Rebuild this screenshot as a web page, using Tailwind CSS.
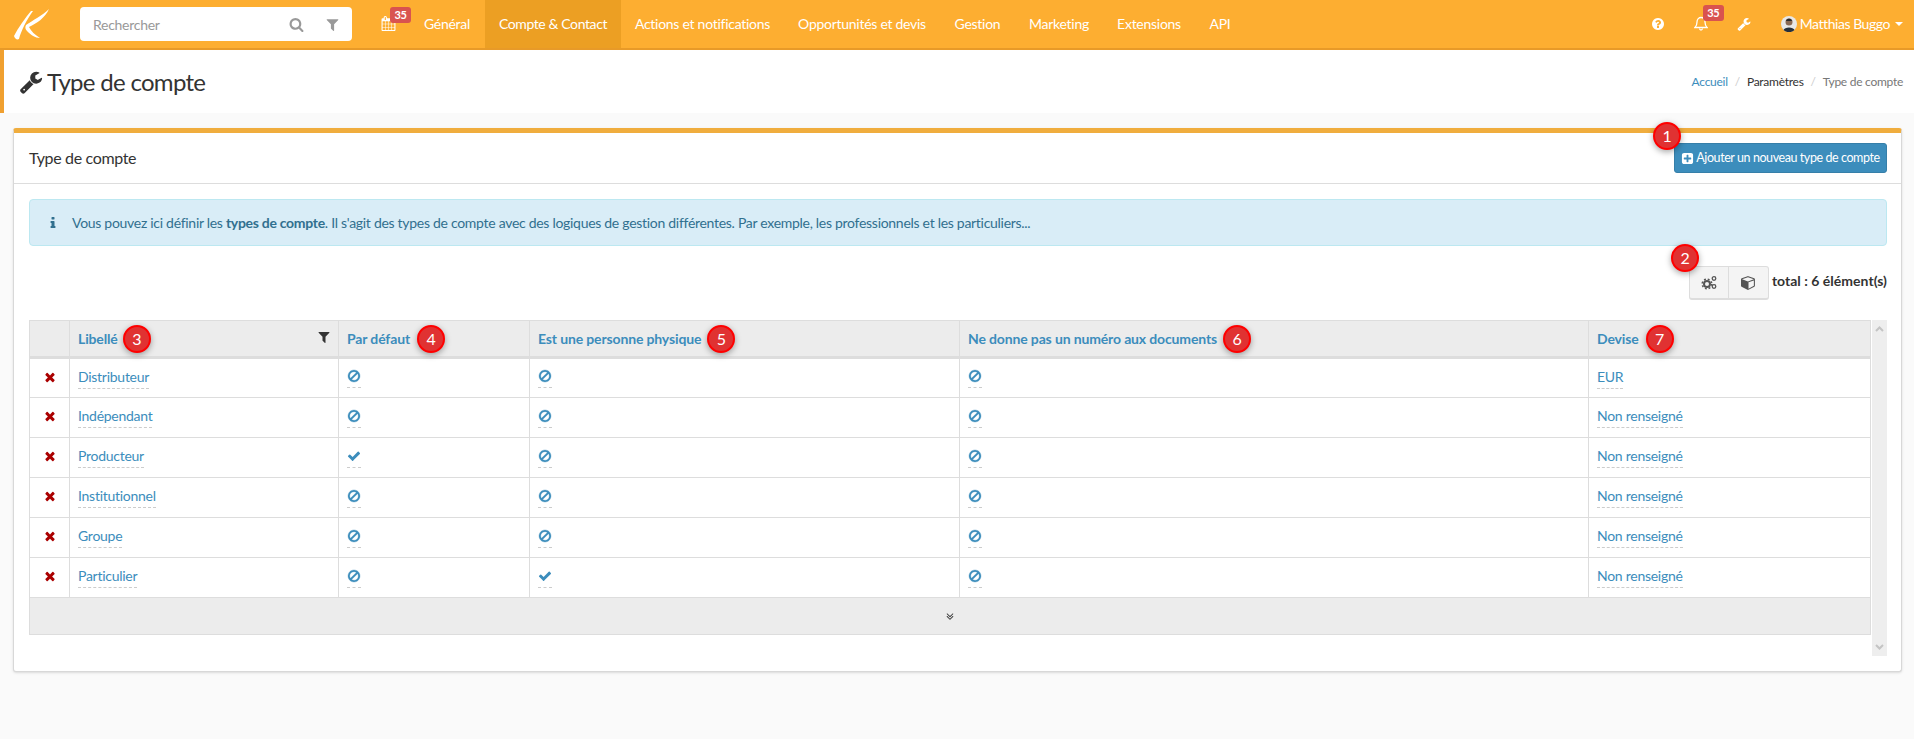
<!doctype html>
<html lang="fr">
<head>
<meta charset="utf-8">
<title>Type de compte</title>
<script src="https://cdn.jsdelivr.net/npm/@tailwindcss/browser@4"></script>
</head>
<body class="bg-[#fafafa] text-[#333] text-[14px] tracking-[-0.27px] h-[739px] overflow-hidden [font-family:Lato,sans-serif]">

<!-- Icon set -->
<svg class="hidden">
  <symbol id="i-ban" viewBox="0 0 1792 1792"><path stroke="#3c8dbc" stroke-width="40" d="M1440 893q0-161-87-295l-754 753q137 89 297 89 111 0 211.5-43.5t173.5-116.5 116-174.5 43-212.5zm-999 299l755-754q-135-91-300-91-148 0-273 73t-198 199-73 274q0 162 89 299zm1223-299q0 157-61 300t-163.5 246-245 164-298.5 61-298.5-61-245-164-163.5-246-61-300 61-299.5 163.5-245.5 245-164 298.5-61 298.5 61 245 164 163.5 245.5 61 299.5z"/></symbol>
  <symbol id="i-check" viewBox="0 0 1792 1792"><path d="M1671 566q0 40-28 68l-724 724-136 136q-28 28-68 28t-68-28l-136-136-362-362q-28-28-28-68t28-68l136-136q28-28 68-28t68 28l294 295 656-657q28-28 68-28t68 28l136 136q28 28 28 68z"/></symbol>
  <symbol id="i-times" viewBox="0 0 1792 1792"><path d="M1490 1322q0 40-28 68l-136 136q-28 28-68 28t-68-28l-294-294-294 294q-28 28-68 28t-68-28l-136-136q-28-28-28-68t28-68l294-294-294-294q-28-28-28-68t28-68l136-136q28-28 68-28t68 28l294 294 294-294q28-28 68-28t68 28l136 136q28 28 28 68t-28 68l-294 294 294 294q28 28 28 68z"/></symbol>
  <symbol id="i-wrench" viewBox="0 0 1792 1792"><path d="M448 1472q0-26-19-45t-45-19-45 19-19 45 19 45 45 19 45-19 19-45zm644-420l-682 682q-37 37-90 37-52 0-91-37l-106-108q-38-36-38-90 0-53 38-91l681-681q39 98 114.5 173.5t173.5 114.5zm634-435q0 39-23 106-47 134-164.5 217.5t-258.5 83.5q-185 0-316.5-131.5t-131.5-316.5 131.5-316.5 316.5-131.5q58 0 121.5 16.5t107.5 46.5q16 11 16 28t-16 28l-293 169v224l193 107q5-3 79-48.5t135.5-81 70.5-35.5q15 0 23.5 10t8.5 25z"/></symbol>
  <symbol id="i-filter" viewBox="0 0 1792 1792"><path d="M1595 295q17 41-14 70l-493 493v742q0 42-39 59-13 5-25 5-27 0-45-19l-256-256q-19-19-19-45v-486l-493-493q-31-29-14-70 17-39 59-39h1280q42 0 59 39z"/></symbol>
</svg>

<!-- Top bar -->
<header class="h-[50px] bg-[#fdae31] border-b-2 border-[#e89a28] flex text-white">
  <div class="w-[80px] pl-[14px] pt-[8px]">
    <svg width="36" height="32" viewBox="0 0 36 32"><path fill="#fff" d="M17 3 C12 9 4 20 0 28 C1 31 3 32 5 31 C7 23 13 11 19 3 Z"/><path fill="#fff" d="M35 1 C28 8 19 12 12 17 C11 19 11 21 13 23 C17 27 21 30 26 30 C21 27 17 23 15 19 C23 15 31 10 35 1 Z"/></svg>
  </div>
  <div class="w-[272px] h-[34px] mt-[7px] bg-white rounded-[4px] flex items-center pl-[13px] pr-[12px] text-[#999]">
    <span class="flex-1">Rechercher</span>
    <svg class="w-[15px] h-[15px] mr-[21px] fill-[#999]" viewBox="0 0 1792 1792"><path d="M1216 832q0-185-131.5-316.5t-316.5-131.5-316.5 131.5-131.5 316.5 131.5 316.5 316.5 131.5 316.5-131.5 131.5-316.5zm512 832q0 52-38 90t-90 38q-54 0-90-38l-343-342q-179 124-399 124-143 0-273.5-55.5t-225-150-150-225-55.5-273.5 55.5-273.5 150-225 225-150 273.5-55.5 273.5 55.5 225 150 150 225 55.5 273.5q0 220-124 399l343 343q37 37 37 90z"/></svg>
    <svg class="w-[15px] h-[15px] fill-[#999]"><use href="#i-filter"/></svg>
  </div>
  <nav class="flex ml-[15px] pb-[1px]">
    <a class="relative w-[42px] pl-[14px] flex items-center">
      <svg class="w-[15px] h-[15px] fill-white" viewBox="0 0 1792 1792"><path d="M192 1664h288v-288h-288v288zm352 0h320v-288h-320v288zm-352-352h288v-320h-288v320zm352 0h320v-320h-320v320zm-352-384h288v-288h-288v288zm736 736h320v-288h-320v288zm-384-736h320v-288h-320v288zm768 736h288v-288h-288v288zm-384-352h320v-320h-320v320zm-352-864v-288q0-13-9.5-22.5t-22.5-9.5h-64q-13 0-22.5 9.5t-9.5 22.5v288q0 13 9.5 22.5t22.5 9.5h64q13 0 22.5-9.5t9.5-22.5zm736 864h288v-320h-288v320zm-384-384h320v-288h-320v288zm384 0h288v-288h-288v288zm32-480v-288q0-13-9.5-22.5t-22.5-9.5h-64q-13 0-22.5 9.5t-9.5 22.5v288q0 13 9.5 22.5t22.5 9.5h64q13 0 22.5-9.5t9.5-22.5zm384-64v1280q0 52-38 90t-90 38h-1408q-52 0-90-38t-38-90v-1280q0-52 38-90t90-38h128v-96q0-66 47-113t113-47h64q66 0 113 47t47 113v96h384v-96q0-66 47-113t113-47h64q66 0 113 47t47 113v96h128q52 0 90 38t38 90z"/></svg>
      <span class="absolute left-[23px] top-[7px] w-[21px] h-[16px] rounded-[3px] bg-[#d9534f] text-[11px] font-bold leading-[16px] text-center">35</span>
    </a>
    <a class="w-[76px] flex items-center justify-center">Général</a>
    <a class="w-[136px] -mb-[1px] pb-[1px] flex items-center justify-center bg-[#ec9f23] tracking-[-0.4px]">Compte &amp; Contact</a>
    <a class="w-[163px] flex items-center justify-center">Actions et notifications</a>
    <a class="w-[156px] flex items-center justify-center">Opportunités et devis</a>
    <a class="w-[75px] flex items-center justify-center">Gestion</a>
    <a class="w-[88px] flex items-center justify-center">Marketing</a>
    <a class="w-[92px] flex items-center justify-center">Extensions</a>
    <a class="w-[50px] flex items-center justify-center">API</a>
  </nav>
  <div class="ml-auto flex items-center pr-[11px] pb-[1px]">
    <svg class="w-[14px] h-[14px] fill-white mr-[29px]" viewBox="0 0 1792 1792"><path d="M1024 1376v-192q0-14-9-23t-23-9h-192q-14 0-23 9t-9 23v192q0 14 9 23t23 9h192q14 0 23-9t9-23zm256-672q0-88-55.5-163t-138.5-116-170-41q-243 0-371 213-15 24 8 42l132 100q7 6 19 6 16 0 25-12 53-68 86-92 34-24 86-24 48 0 85.5 26t37.5 59q0 38-20 61t-68 45q-63 28-115.5 86.5t-52.5 125.5v36q0 14 9 23t23 9h192q14 0 23-9t9-23q0-19 21.5-49.5t54.5-49.5q32-18 49-28.5t46-35 44.5-48 28-60.5 12.5-81zm384 192q0 209-103 385.5t-279.5 279.5-385.5 103-385.5-103-279.5-279.5-103-385.5 103-385.5 279.5-279.5 385.5-103 385.5 103 279.5 279.5 103 385.5z"/></svg>
    <span class="relative mr-[29px]">
      <svg class="block w-[14px] h-[15px] fill-none stroke-white" viewBox="0 0 14 15" stroke-width="1.3"><path d="M1 11.5 C2.5 10 3 8.5 3 6 C3 3 5 1.5 7 1.5 C9 1.5 11 3 11 6 C11 8.5 11.500 10 13 11.500 Z"/><path d="M5.500 12.500 C5.800 14.500 8.200 14.500 8.500 12.500"/></svg>
      <span class="absolute left-[9px] top-[-11px] w-[21px] h-[16px] rounded-[3px] bg-[#d9534f] text-[11px] font-bold leading-[16px] text-center">35</span>
    </span>
    <svg class="w-[14px] h-[14px] fill-white mr-[30px]"><use href="#i-wrench"/></svg>
    <svg class="w-[16px] h-[16px] mr-[3px]" viewBox="0 0 16 16"><circle cx="8" cy="8" r="8" fill="#e8e8e8"/><circle cx="8" cy="6" r="3.500" fill="#8a6a55"/><path d="M5 4.500 C6 2 10 2 11 4.500 L10.500 5 L5.500 5 Z" fill="#2b2b2b"/><path d="M2.500 14 C3.500 10.500 12.500 10.500 13.500 14 A8 8 0 0 1 2.500 14 Z" fill="#26303c"/></svg>
    <span class="tracking-[-0.45px]">Matthias Buggo</span>
    <span class="ml-[5px] w-0 h-0 border-x-[4px] border-x-transparent border-t-[4px] border-t-white"></span>
  </div>
</header>

<!-- Page title -->
<section class="h-[63px] bg-white border-l-[4px] border-[#f0a030] flex items-center pl-[15px] pr-[11px]">
  <svg class="w-[24px] h-[24px] fill-[#333] mr-[4px]"><use href="#i-wrench"/></svg>
  <h1 class="text-[24px] tracking-[-0.7px]">Type de compte</h1>
  <div class="ml-auto text-[12px] flex gap-[7px]">
    <a class="text-[#3c8dbc]">Accueil</a><span class="text-[#ccc]">/</span><span>Paramètres</span><span class="text-[#ccc]">/</span><span class="text-[#777]">Type de compte</span>
  </div>
</section>

<!-- Panel -->
<main class="mt-[15px] ml-[13px] mr-[12px] h-[544px] bg-white border border-[#d8d8d8] border-t-[5px] border-t-[#f0ad3e] rounded-[3px] shadow-sm">
  <div class="h-[51px] pl-[15px] pr-[14px] border-b border-[#ddd] flex items-start justify-between">
    <h2 class="text-[16px] tracking-[-0.35px] mt-[13px]">Type de compte</h2>
    <a class="relative mt-[10px] w-[213px] h-[30px] bg-[#3c8dbc] border border-[#367fa9] rounded-[3px] text-white text-[12.5px] tracking-[-0.42px] whitespace-nowrap flex items-center justify-center gap-[2px]">
      <svg class="w-[13px] h-[13px] fill-white" viewBox="0 0 1792 1792"><path d="M1408 960v-128q0-26-19-45t-45-19h-320v-320q0-26-19-45t-45-19h-128q-26 0-45 19t-19 45v320h-320q-26 0-45 19t-19 45v128q0 26 19 45t45 19h320v320q0 26 19 45t45 19h128q26 0 45-19t19-45v-320h320q26 0 45-19t19-45zm256-544v960q0 119-84.5 203.5t-203.5 84.5h-960q-119 0-203.5-84.5t-84.5-203.5v-960q0-119 84.5-203.5t203.5-84.5h960q119 0 203.5 84.5t84.5 203.5z"/></svg>
      Ajouter un nouveau type de compte
      <span class="absolute left-[-22px] top-[-22px] w-[28px] h-[28px] rounded-full bg-[#e03232] border-2 border-[#f00] text-white text-[16px] flex items-center justify-center shadow-[0_2px_6px_rgba(0,0,0,0.35)]">1</span>
    </a>
  </div>

  <div class="pl-[15px] pr-[14px] pt-[15px]">
    <div class="h-[47px] bg-[#d9edf7] border border-[#bce8f1] rounded-[4px] flex items-center text-[#31708f]">
      <svg class="w-[14px] h-[14px] fill-[#31708f] ml-[16px] mr-[12px]" viewBox="0 0 1792 1792"><path d="M1216 1344v128q0 26-19 45t-45 19h-512q-26 0-45-19t-19-45v-128q0-26 19-45t45-19h64v-384h-64q-26 0-45-19t-19-45v-128q0-26 19-45t45-19h384q26 0 45 19t19 45v576h64q26 0 45 19t19 45zm-128-1152v192q0 26-19 45t-45 19h-256q-26 0-45-19t-19-45v-192q0-26 19-45t45-19h256q26 0 45 19t19 45z"/></svg>
      <p class="tracking-[-0.29px]">Vous pouvez ici définir les <b>types de compte</b>. Il s'agit des types de compte avec des logiques de gestion différentes. Par exemple, les professionnels et les particuliers...</p>
    </div>

    <div class="mt-[20px] flex justify-end">
      <div class="relative flex h-[34px] bg-[#f4f4f4] border border-[#ddd] border-b-2 rounded-[3px]">
        <button class="w-[39px] flex items-center justify-center border-r border-[#ddd]">
          <svg width="16" height="15" viewBox="0 0 16 15"><circle cx="6" cy="9" r="3" fill="none" stroke="#555" stroke-width="2"/><circle cx="6" cy="9" r="4.800" fill="none" stroke="#555" stroke-width="1.500" stroke-dasharray="1.900 1.900"/><circle cx="13" cy="3.500" r="1.800" fill="none" stroke="#555" stroke-width="1.300"/><circle cx="13" cy="11.500" r="1.800" fill="none" stroke="#555" stroke-width="1.300"/></svg>
        </button>
        <button class="w-[39px] flex items-center justify-center">
          <svg class="w-[15px] h-[15px] fill-[#555]" viewBox="0 0 1792 1792"><path d="M896 1629l640-349v-636l-640 233v752zm-64-865l698-254-698-254-698 254zm832-252v768q0 35-18 65t-49 47l-704 384q-28 16-61 16t-61-16l-704-384q-31-17-49-47t-18-65v-768q0-40 23-73t61-47l704-256q22-8 44-8t44 8l704 256q38 14 61 47t23 73z"/></svg>
        </button>
        <span class="absolute left-[-19px] top-[-23px] w-[28px] h-[28px] rounded-full bg-[#e03232] border-2 border-[#f00] text-white text-[16px] flex items-center justify-center shadow-[0_2px_6px_rgba(0,0,0,0.35)]">2</span>
      </div>
      <b class="ml-[3px] mt-[4px] tracking-[0.02px] whitespace-nowrap">total : 6 élément(s)</b>
    </div>

    <div class="mt-[20px] h-[336px] flex items-start">
      <table class="w-[1841px] table-fixed border-collapse text-[#3c8dbc]">
        <colgroup><col class="w-[40px]"><col class="w-[269px]"><col class="w-[191px]"><col class="w-[430px]"><col class="w-[629px]"><col class="w-[282px]"></colgroup>
        <thead class="tracking-[-0.14px]">
          <tr class="bg-[#ececec]">
            <th class="h-[37px] p-0 border border-b-[3px] border-[#ddd]"></th>
            <th class="relative h-[37px] py-0 border border-b-[3px] border-[#ddd] px-[8px] text-left"><span class="flex items-center gap-[5px] -my-[4px]">Libellé <span class="w-[28px] h-[28px] rounded-full bg-[#e03232] border-2 border-[#f00] text-white text-[16px] font-normal flex items-center justify-center shadow-[0_2px_6px_rgba(0,0,0,0.35)]">3</span></span>
              <svg class="absolute right-[7px] top-[9px] w-[14px] h-[14px] fill-[#333]"><use href="#i-filter"/></svg>
            </th>
            <th class="h-[37px] py-0 border border-b-[3px] border-[#ddd] px-[8px] text-left"><span class="flex items-center gap-[7px] -my-[4px]">Par défaut <span class="w-[28px] h-[28px] rounded-full bg-[#e03232] border-2 border-[#f00] text-white text-[16px] font-normal flex items-center justify-center shadow-[0_2px_6px_rgba(0,0,0,0.35)]">4</span></span></th>
            <th class="h-[37px] py-0 border border-b-[3px] border-[#ddd] px-[8px] text-left"><span class="flex items-center gap-[6px] -my-[4px]">Est une personne physique <span class="w-[28px] h-[28px] rounded-full bg-[#e03232] border-2 border-[#f00] text-white text-[16px] font-normal flex items-center justify-center shadow-[0_2px_6px_rgba(0,0,0,0.35)]">5</span></span></th>
            <th class="h-[37px] py-0 border border-b-[3px] border-[#ddd] px-[8px] text-left"><span class="flex items-center gap-[6px] -my-[4px]">Ne donne pas un numéro aux documents <span class="w-[28px] h-[28px] rounded-full bg-[#e03232] border-2 border-[#f00] text-white text-[16px] font-normal flex items-center justify-center shadow-[0_2px_6px_rgba(0,0,0,0.35)]">6</span></span></th>
            <th class="h-[37px] py-0 border border-b-[3px] border-[#ddd] px-[8px] text-left"><span class="flex items-center gap-[7px] -my-[4px]">Devise <span class="w-[28px] h-[28px] rounded-full bg-[#e03232] border-2 border-[#f00] text-white text-[16px] font-normal flex items-center justify-center shadow-[0_2px_6px_rgba(0,0,0,0.35)]">7</span></span></th>
          </tr>
        </thead>
        <tbody>
          <tr class="h-[40px]">
            <td class="border border-[#ddd]"><svg class="mx-auto -mt-[3px] w-[14px] h-[14px] fill-[#a00]"><use href="#i-times"/></svg></td>
            <td class="border border-[#ddd] px-[8px]"><span class="block w-fit leading-[17px] pb-[3px] border-b border-dashed border-[#ccc]">Distributeur</span></td>
            <td class="border border-[#ddd] px-[8px]"><span class="block w-fit pt-[1px] pb-[4px] border-b border-dashed border-[#ccc]"><svg class="block w-[14px] h-[14px] fill-[#3c8dbc]"><use href="#i-ban"/></svg></span></td>
            <td class="border border-[#ddd] px-[8px]"><span class="block w-fit pt-[1px] pb-[4px] border-b border-dashed border-[#ccc]"><svg class="block w-[14px] h-[14px] fill-[#3c8dbc]"><use href="#i-ban"/></svg></span></td>
            <td class="border border-[#ddd] px-[8px]"><span class="block w-fit pt-[1px] pb-[4px] border-b border-dashed border-[#ccc]"><svg class="block w-[14px] h-[14px] fill-[#3c8dbc]"><use href="#i-ban"/></svg></span></td>
            <td class="border border-[#ddd] px-[8px]"><span class="block w-fit leading-[17px] pb-[3px] border-b border-dashed border-[#ccc]">EUR</span></td>
          </tr>
          <tr class="h-[40px]">
            <td class="border border-[#ddd]"><svg class="mx-auto -mt-[3px] w-[14px] h-[14px] fill-[#a00]"><use href="#i-times"/></svg></td>
            <td class="border border-[#ddd] px-[8px]"><span class="block w-fit leading-[17px] pb-[3px] border-b border-dashed border-[#ccc]">Indépendant</span></td>
            <td class="border border-[#ddd] px-[8px]"><span class="block w-fit pt-[1px] pb-[4px] border-b border-dashed border-[#ccc]"><svg class="block w-[14px] h-[14px] fill-[#3c8dbc]"><use href="#i-ban"/></svg></span></td>
            <td class="border border-[#ddd] px-[8px]"><span class="block w-fit pt-[1px] pb-[4px] border-b border-dashed border-[#ccc]"><svg class="block w-[14px] h-[14px] fill-[#3c8dbc]"><use href="#i-ban"/></svg></span></td>
            <td class="border border-[#ddd] px-[8px]"><span class="block w-fit pt-[1px] pb-[4px] border-b border-dashed border-[#ccc]"><svg class="block w-[14px] h-[14px] fill-[#3c8dbc]"><use href="#i-ban"/></svg></span></td>
            <td class="border border-[#ddd] px-[8px]"><span class="block w-fit leading-[17px] pb-[3px] border-b border-dashed border-[#ccc]">Non renseigné</span></td>
          </tr>
          <tr class="h-[40px]">
            <td class="border border-[#ddd]"><svg class="mx-auto -mt-[3px] w-[14px] h-[14px] fill-[#a00]"><use href="#i-times"/></svg></td>
            <td class="border border-[#ddd] px-[8px]"><span class="block w-fit leading-[17px] pb-[3px] border-b border-dashed border-[#ccc]">Producteur</span></td>
            <td class="border border-[#ddd] px-[8px]"><span class="block w-fit pt-[1px] pb-[4px] border-b border-dashed border-[#ccc]"><svg class="block w-[14px] h-[14px] fill-[#3c8dbc]"><use href="#i-check"/></svg></span></td>
            <td class="border border-[#ddd] px-[8px]"><span class="block w-fit pt-[1px] pb-[4px] border-b border-dashed border-[#ccc]"><svg class="block w-[14px] h-[14px] fill-[#3c8dbc]"><use href="#i-ban"/></svg></span></td>
            <td class="border border-[#ddd] px-[8px]"><span class="block w-fit pt-[1px] pb-[4px] border-b border-dashed border-[#ccc]"><svg class="block w-[14px] h-[14px] fill-[#3c8dbc]"><use href="#i-ban"/></svg></span></td>
            <td class="border border-[#ddd] px-[8px]"><span class="block w-fit leading-[17px] pb-[3px] border-b border-dashed border-[#ccc]">Non renseigné</span></td>
          </tr>
          <tr class="h-[40px]">
            <td class="border border-[#ddd]"><svg class="mx-auto -mt-[3px] w-[14px] h-[14px] fill-[#a00]"><use href="#i-times"/></svg></td>
            <td class="border border-[#ddd] px-[8px]"><span class="block w-fit leading-[17px] pb-[3px] border-b border-dashed border-[#ccc]">Institutionnel</span></td>
            <td class="border border-[#ddd] px-[8px]"><span class="block w-fit pt-[1px] pb-[4px] border-b border-dashed border-[#ccc]"><svg class="block w-[14px] h-[14px] fill-[#3c8dbc]"><use href="#i-ban"/></svg></span></td>
            <td class="border border-[#ddd] px-[8px]"><span class="block w-fit pt-[1px] pb-[4px] border-b border-dashed border-[#ccc]"><svg class="block w-[14px] h-[14px] fill-[#3c8dbc]"><use href="#i-ban"/></svg></span></td>
            <td class="border border-[#ddd] px-[8px]"><span class="block w-fit pt-[1px] pb-[4px] border-b border-dashed border-[#ccc]"><svg class="block w-[14px] h-[14px] fill-[#3c8dbc]"><use href="#i-ban"/></svg></span></td>
            <td class="border border-[#ddd] px-[8px]"><span class="block w-fit leading-[17px] pb-[3px] border-b border-dashed border-[#ccc]">Non renseigné</span></td>
          </tr>
          <tr class="h-[40px]">
            <td class="border border-[#ddd]"><svg class="mx-auto -mt-[3px] w-[14px] h-[14px] fill-[#a00]"><use href="#i-times"/></svg></td>
            <td class="border border-[#ddd] px-[8px]"><span class="block w-fit leading-[17px] pb-[3px] border-b border-dashed border-[#ccc]">Groupe</span></td>
            <td class="border border-[#ddd] px-[8px]"><span class="block w-fit pt-[1px] pb-[4px] border-b border-dashed border-[#ccc]"><svg class="block w-[14px] h-[14px] fill-[#3c8dbc]"><use href="#i-ban"/></svg></span></td>
            <td class="border border-[#ddd] px-[8px]"><span class="block w-fit pt-[1px] pb-[4px] border-b border-dashed border-[#ccc]"><svg class="block w-[14px] h-[14px] fill-[#3c8dbc]"><use href="#i-ban"/></svg></span></td>
            <td class="border border-[#ddd] px-[8px]"><span class="block w-fit pt-[1px] pb-[4px] border-b border-dashed border-[#ccc]"><svg class="block w-[14px] h-[14px] fill-[#3c8dbc]"><use href="#i-ban"/></svg></span></td>
            <td class="border border-[#ddd] px-[8px]"><span class="block w-fit leading-[17px] pb-[3px] border-b border-dashed border-[#ccc]">Non renseigné</span></td>
          </tr>
          <tr class="h-[40px]">
            <td class="border border-[#ddd]"><svg class="mx-auto -mt-[3px] w-[14px] h-[14px] fill-[#a00]"><use href="#i-times"/></svg></td>
            <td class="border border-[#ddd] px-[8px]"><span class="block w-fit leading-[17px] pb-[3px] border-b border-dashed border-[#ccc]">Particulier</span></td>
            <td class="border border-[#ddd] px-[8px]"><span class="block w-fit pt-[1px] pb-[4px] border-b border-dashed border-[#ccc]"><svg class="block w-[14px] h-[14px] fill-[#3c8dbc]"><use href="#i-ban"/></svg></span></td>
            <td class="border border-[#ddd] px-[8px]"><span class="block w-fit pt-[1px] pb-[4px] border-b border-dashed border-[#ccc]"><svg class="block w-[14px] h-[14px] fill-[#3c8dbc]"><use href="#i-check"/></svg></span></td>
            <td class="border border-[#ddd] px-[8px]"><span class="block w-fit pt-[1px] pb-[4px] border-b border-dashed border-[#ccc]"><svg class="block w-[14px] h-[14px] fill-[#3c8dbc]"><use href="#i-ban"/></svg></span></td>
            <td class="border border-[#ddd] px-[8px]"><span class="block w-fit leading-[17px] pb-[3px] border-b border-dashed border-[#ccc]">Non renseigné</span></td>
          </tr>
        </tbody>
        <tfoot>
          <tr class="h-[37px] bg-[#ececec]">
            <td colspan="6" class="border border-[#ddd]"><svg class="mx-auto -mt-[2px] w-[12px] h-[12px] fill-[#333]" viewBox="0 0 1792 1792"><path d="M1395 736q0 13-10 23l-466 466q-10 10-23 10t-23-10l-466-466q-10-10-10-23t10-23l50-50q10-10 23-10t23 10l393 393 393-393q10-10 23-10t23 10l50 50q10 10 10 23zm0 384q0 13-10 23l-466 466q-10 10-23 10t-23-10l-466-466q-10-10-10-23t10-23l50-50q10-10 23-10t23 10l393 393 393-393q10-10 23-10t23 10l50 50q10 10 10 23z"/></svg></td>
          </tr>
        </tfoot>
      </table>
      <div class="ml-px w-[16px] h-[336px] bg-[#eee] flex flex-col items-center justify-between py-[6px]">
        <svg width="9" height="6" viewBox="0 0 9 6" fill="none" stroke="#c4c4c4" stroke-width="2"><path d="M1 5 L4.500 1.500 L8 5"/></svg>
        <svg width="9" height="6" viewBox="0 0 9 6" fill="none" stroke="#c4c4c4" stroke-width="2"><path d="M1 1 L4.500 4.500 L8 1"/></svg>
      </div>
    </div>
  </div>
</main>
</body>
</html>
